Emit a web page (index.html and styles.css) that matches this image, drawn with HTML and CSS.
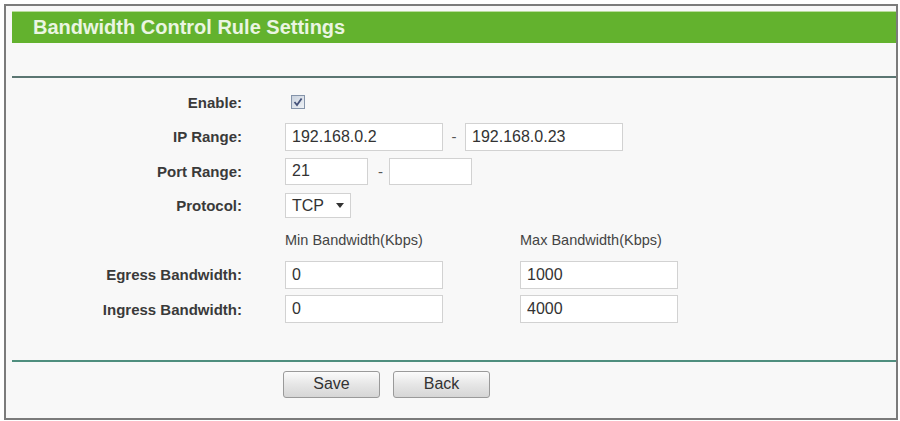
FILE: index.html
```html
<!DOCTYPE html>
<html lang="en">

<head>
    <meta charset="UTF-8">
    <meta name="viewport" content="width=device-width, initial-scale=1.0">
    <link rel="stylesheet" href="styles.css">
</head>

<body>
    <div class="panel">
        <div class="head">Bandwidth Control Rule Settings</div>
        <div class="rule"></div>

        <div class="form">
            <span class="label">Enable:</span>
            <div class="field">
                <span class="check">
                    <svg width="10" height="10" viewBox="0 0 10 10" xmlns="http://www.w3.org/2000/svg">
                        <path d="M1.5 5 L4 8 L8.6 1.5" fill="none" stroke="#45527a" stroke-width="1.8" />
                    </svg>
                </span>
            </div>

            <span class="label">IP Range:</span>
            <div class="field">
                <input class="text wide" type="text" value="192.168.0.2">
                <span class="dash">-</span>
                <input class="text wide" type="text" value="192.168.0.23">
            </div>

            <span class="label">Port Range:</span>
            <div class="field">
                <input class="text short" type="text" value="21">
                <span class="dash port">-</span>
                <input class="text short" type="text" value="">
            </div>

            <span class="label">Protocol:</span>
            <div class="field">
                <div class="select">
                    <span>TCP</span>
                    <svg width="8" height="5" viewBox="0 0 8 5" xmlns="http://www.w3.org/2000/svg">
                        <path d="M0 0 H8 L4 5 Z" fill="#333" />
                    </svg>
                </div>
            </div>

            <span class="label"></span>
            <div class="field bw">
                <span class="caption">Min Bandwidth(Kbps)</span>
                <span class="caption">Max Bandwidth(Kbps)</span>
            </div>

            <span class="label">Egress Bandwidth:</span>
            <div class="field bw">
                <input class="text wide" type="text" value="0">
                <input class="text wide" type="text" value="1000">
            </div>

            <span class="label">Ingress Bandwidth:</span>
            <div class="field bw">
                <input class="text wide" type="text" value="0">
                <input class="text wide" type="text" value="4000">
            </div>
        </div>

        <div class="rule bottom"></div>

        <div class="actions">
            <button class="btn">Save</button>
            <button class="btn">Back</button>
        </div>
    </div>
</body>

</html>
```

FILE: styles.css
```css
body {
    margin: 0;
    padding: 0;
    background: #ffffff;
    font-family: "Liberation Sans", Arial, sans-serif;
    color: #333333;
}

.panel {
    box-sizing: border-box;
    width: 894px;
    height: 416px;
    margin: 4px 0 0 4px;
    border: 2px solid #7b7b7b;
    background: #f8f8f8;
}

.head {
    height: 32px;
    margin: 5px 0 0 6px;
    padding-left: 21px;
    background: #63b22e;
    border-top: 1px solid #b9dc9c;
    box-sizing: border-box;
    color: #eaf5e2;
    font-size: 20px;
    font-weight: bold;
    line-height: 30px;
}

.rule {
    height: 2px;
    margin: 33px 0 0 6px;
    background: #5b7672;
}

.rule.bottom {
    margin-top: 33px;
    background: #4f8e7e;
}

.form {
    display: grid;
    grid-template-columns: 236px 1fr;
    grid-auto-rows: 34.5px;
    column-gap: 43px;
    padding-top: 7px;
}

.label {
    align-self: center;
    text-align: right;
    font-size: 15px;
    font-weight: bold;
    color: #3a3a3a;
}

.field {
    display: flex;
    align-items: center;
}

.check {
    display: flex;
    align-items: center;
    justify-content: center;
    box-sizing: border-box;
    width: 14px;
    height: 14px;
    margin-left: 6px;
    border: 1px solid #8594aa;
    background: linear-gradient(135deg, #c9d2de, #eef1f5);
}

.text {
    box-sizing: border-box;
    height: 28px;
    padding: 0 6px;
    border: 1px solid #d2d2d2;
    background: #ffffff;
    font-family: "Liberation Sans", Arial, sans-serif;
    font-size: 16px;
    color: #333333;
    outline: none;
}

.text.wide {
    width: 158px;
}

.text.short {
    width: 83px;
    height: 27px;
}

.dash {
    width: 22px;
    text-align: center;
    font-size: 15px;
    color: #555555;
}

.dash.port {
    width: 21px;
    padding-left: 4px;
    box-sizing: border-box;
}

.select {
    display: flex;
    align-items: center;
    justify-content: space-between;
    box-sizing: border-box;
    width: 66px;
    height: 25px;
    padding: 0 6px 0 6px;
    border: 1px solid #d2d2d2;
    background: #ffffff;
    font-size: 16px;
}

.field.bw {
    display: grid;
    grid-template-columns: 235px 158px;
    align-items: center;
}

.caption {
    font-size: 14.5px;
    color: #444444;
}

.actions {
    display: flex;
    gap: 13px;
    padding: 9px 0 0 277px;
}

.btn {
    width: 97px;
    height: 27px;
    border: 1px solid #9a9a9a;
    border-radius: 3px;
    background: linear-gradient(#fbfbfb, #e6e6e6 50%, #d6d6d6);
    font-family: "Liberation Sans", Arial, sans-serif;
    font-size: 16px;
    color: #333333;
}
```
